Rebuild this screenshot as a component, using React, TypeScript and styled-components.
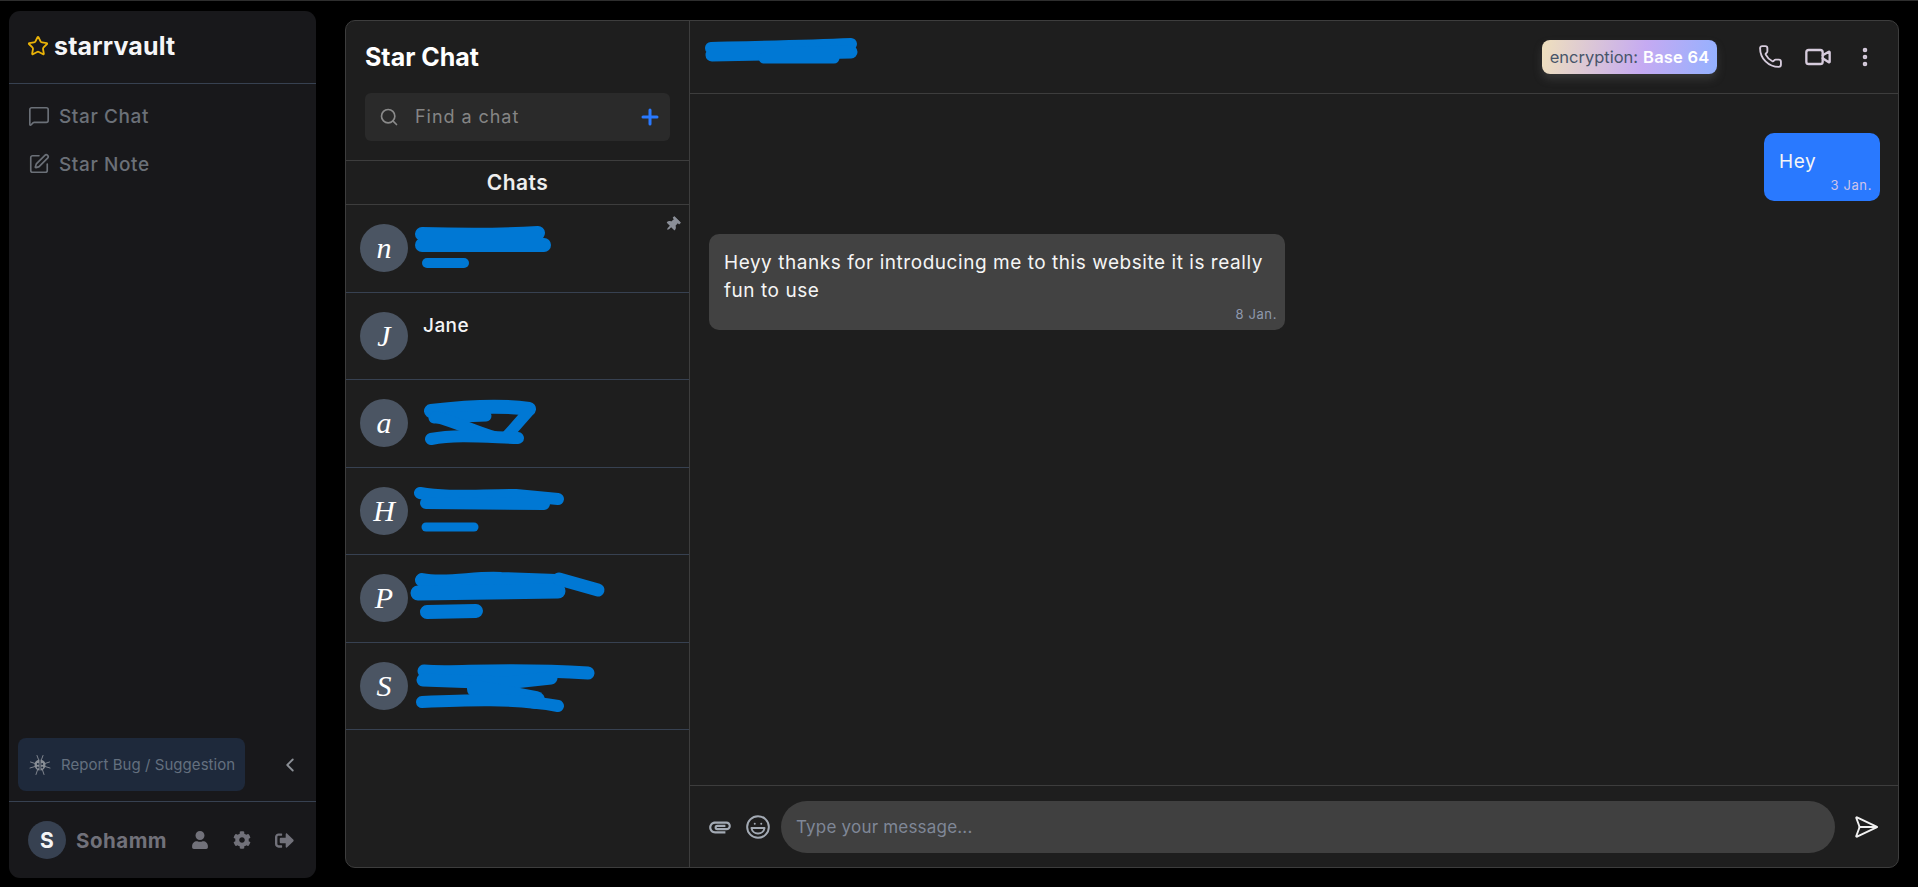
import React from "react";
import styled, { createGlobalStyle } from "styled-components";
import {
  ChevronLeft,
  EllipsisVertical,
  Laugh,
  MessageSquare,
  Phone,
  Plus,
  Search,
  SendHorizontal,
  SquarePen,
  Star,
  Video,
} from "lucide-react";
import { FaCog, FaSignOutAlt, FaThumbtack, FaUser } from "react-icons/fa";
import { MdAttachment } from "react-icons/md";

const GlobalStyle = createGlobalStyle`
  html, body {
    margin: 0;
    height: 100%;
    background: #000;
  }
  * {
    box-sizing: border-box;
  }
  body {
    font-family: Inter, "Liberation Sans", sans-serif;
    overflow: hidden;
  }
`;

const Page = styled.div`
  display: flex;
  height: 887px;
  padding: 10px 19px 9px 9px;
  border-top: 1px solid #2e2e2e;
  background: #000;
`;

const Sidebar = styled.aside`
  width: 307px;
  flex-shrink: 0;
  display: flex;
  flex-direction: column;
  background: #18181b;
  border-radius: 11px;
`;

const Brand = styled.div`
  height: 73px;
  display: flex;
  align-items: center;
  gap: 5px;
  padding: 0 0 2px 18px;
  border-bottom: 1px solid #374151;
  color: #f5f5f7;
  font-size: 25px;
  font-weight: 700;
  letter-spacing: 0.15px;
`;

const Nav = styled.nav`
  flex: 1;
  display: flex;
  flex-direction: column;
  gap: 24px;
  padding: 20px 0 0 19px;
`;

const NavItem = styled.div`
  display: flex;
  align-items: center;
  gap: 9px;
  height: 24px;
  color: #6b7078;
  font-size: 19px;
  font-weight: 500;
  letter-spacing: 0.6px;
`;

const ReportRow = styled.div`
  display: flex;
  align-items: center;
  padding: 0 0 10px 9px;
  color: #8b8f96;
`;

const ReportButton = styled.div`
  width: 227px;
  height: 53px;
  display: flex;
  align-items: center;
  gap: 10px;
  padding-left: 11px;
  margin-right: 34px;
  background: #1e293b;
  border-radius: 8px;
  color: #64707f;
  font-size: 15px;
  letter-spacing: 0.05px;
  white-space: nowrap;
`;

const BugIcon = styled.svg`
  width: 22px;
  height: 22px;
  flex-shrink: 0;
  fill: none;
  stroke: #8a8f96;
  stroke-linecap: round;
`;

const UserBar = styled.div`
  flex: 1 0 77px;
  max-height: 77px;
  display: flex;
  align-items: center;
  padding-left: 19px;
  border-top: 1px solid #374151;
  color: #71717a;
`;

const UserAvatar = styled.div`
  width: 38px;
  height: 38px;
  border-radius: 50%;
  display: flex;
  align-items: center;
  justify-content: center;
  background: #374151;
  color: #f4f4f5;
  font-size: 21px;
  font-weight: 700;
`;

const UserName = styled.span`
  width: 125px;
  padding-left: 10px;
  font-size: 20.5px;
  font-weight: 700;
  letter-spacing: 0.5px;
`;

const UserActions = styled.div`
  display: flex;
  align-items: center;
  gap: 24px;
`;

const Panel = styled.main`
  flex: 1;
  display: flex;
  margin: 9px 0 10px 29px;
  background: #1e1e1e;
  border: 1px solid #3d3d3d;
  border-radius: 10px;
  overflow: hidden;
`;

const ChatList = styled.section`
  width: 344px;
  flex-shrink: 0;
  border-right: 1px solid #3d3d3d;
`;

const ListHead = styled.div`
  padding: 18px 19px 19px;
  border-bottom: 1px solid #3d3d3d;
`;

const Title = styled.h1`
  margin: 0 0 18px;
  color: #fff;
  font-size: 25px;
  line-height: 36px;
  font-weight: 700;
  letter-spacing: 0;
`;

const SearchBox = styled.div`
  height: 48px;
  display: flex;
  align-items: center;
  padding: 0 8px 0 14px;
  background: #2a2a2a;
  border-radius: 6px;
  color: #8a8a8a;
`;

const SearchInput = styled.input`
  flex: 1;
  min-width: 0;
  margin: -2px 0 0 14px;
  border: 0;
  outline: 0;
  background: transparent;
  color: #fff;
  font: 400 18px Inter, "Liberation Sans", sans-serif;
  letter-spacing: 0.95px;
  &::placeholder {
    color: #858585;
    opacity: 1;
  }
`;

const SectionLabel = styled.div`
  height: 44px;
  display: flex;
  align-items: center;
  justify-content: center;
  border-bottom: 1px solid #3d3d3d;
  color: #eeeeee;
  font-size: 21px;
  font-weight: 600;
  letter-spacing: 0.5px;
`;

const Row = styled.div`
  position: relative;
  height: 87.5px;
  display: flex;
  align-items: center;
  gap: 15px;
  padding-left: 14px;
  border-bottom: 1px solid #374151;
`;

const LetterAvatar = styled.div`
  width: 48px;
  height: 48px;
  flex-shrink: 0;
  border-radius: 50%;
  display: flex;
  align-items: center;
  justify-content: center;
  background: #4b5563;
  color: #fff;
  font-family: "Liberation Serif", serif;
  font-style: italic;
  font-size: 30px;
`;

const RowName = styled.div`
  align-self: flex-start;
  padding-top: 20px;
  color: #f4f4f5;
  font-size: 19px;
  line-height: 26px;
  font-weight: 500;
  letter-spacing: 0.45px;
`;

const PinMark = styled.span`
  position: absolute;
  top: 12px;
  right: 9px;
  color: #8b8f98;
  transform: rotate(45deg);
  display: flex;
`;

const Scribble = styled.svg`
  position: absolute;
  left: 0;
  top: 0;
  width: 343px;
  height: 87px;
  fill: none;
  stroke: #0078d4;
  stroke-linecap: round;
  stroke-linejoin: round;
  pointer-events: none;
`;

const ChatArea = styled.section`
  flex: 1;
  min-width: 0;
  display: flex;
  flex-direction: column;
`;

const ChatHeader = styled.header`
  height: 73px;
  flex-shrink: 0;
  display: flex;
  align-items: center;
  padding: 0 21px 0 14px;
  border-bottom: 1px solid #3d3d3d;
  color: #d6cbdc;
`;

const HeaderScribble = styled.svg`
  width: 154px;
  height: 28px;
  margin-right: auto;
  margin-top: -12px;
  fill: none;
  stroke: #0078d4;
  stroke-linecap: round;
`;

const EncryptionTag = styled.div`
  width: 175px;
  height: 34px;
  margin: 0 41px 0 0;
  display: flex;
  align-items: center;
  justify-content: center;
  gap: 5px;
  background: linear-gradient(100deg, #efe0bd 0%, #c5aaf2 58%, #93b1ff 100%);
  border-radius: 8px;
  box-shadow: 0 5px 8px rgba(85, 85, 85, 0.45);
  color: #475569;
  font-size: 16.5px;
  white-space: nowrap;
`;

const TagValue = styled.span`
  color: #fff;
  font-weight: 600;
  letter-spacing: 0.2px;
`;

const HeaderIcons = styled.div`
  display: flex;
  align-items: center;
  gap: 21px;
  margin-top: -1px;
`;

const Messages = styled.div`
  flex: 1;
  display: flex;
  flex-direction: column;
  gap: 33px;
  padding: 39px 18px 0 19px;
`;

const Bubble = styled.div<{ $mine?: boolean }>`
  align-self: ${(p) => (p.$mine ? "flex-end" : "flex-start")};
  width: ${(p) => (p.$mine ? "116px" : "576px")};
  padding: 15px 8px 7px 15px;
  border-radius: 10px;
  background: ${(p) => (p.$mine ? "#2979ff" : "#424242")};
  color: #f5f5f5;
  font-size: 19px;
  line-height: 28px;
  letter-spacing: 0.54px;
`;

const Stamp = styled.div<{ $mine?: boolean }>`
  text-align: right;
  color: ${(p) => (p.$mine ? "#cfc4ea" : "#8f99ad")};
  font-size: 13px;
  line-height: 18px;
  letter-spacing: 0.6px;
`;

const Composer = styled.footer`
  height: 82px;
  flex-shrink: 0;
  display: flex;
  align-items: center;
  padding: 0 19px 0 17px;
  border-top: 1px solid #3d3d3d;
  color: #a3aab4;
`;

const SmileWrap = styled.span`
  display: flex;
  margin: 0 10px 0 12px;
`;

const MessageInput = styled.input`
  flex: 1;
  height: 52px;
  min-width: 0;
  margin-right: 18px;
  padding: 0 15px;
  border: 0;
  outline: 0;
  border-radius: 26px;
  background: #404040;
  color: #fff;
  font: 400 17px Inter, "Liberation Sans", sans-serif;
  letter-spacing: 0.2px;
  &::placeholder {
    color: #7f8797;
    opacity: 1;
  }
`;

type Chat = {
  letter: string;
  name?: string;
  pinned?: boolean;
  strokes: { d: string; w: number }[];
};

// the names on these rows are painted over in the reference
const chats: Chat[] = [
  {
    letter: "n",
    pinned: true,
    strokes: [
      { d: "M76 29 C110 30 160 30 192 28", w: 14 },
      { d: "M76 40 L198 40", w: 14 },
      { d: "M81 58 L118 58", w: 10 },
    ],
  },
  { letter: "J", name: "Jane", strokes: [] },
  {
    letter: "a",
    strokes: [
      { d: "M85 31 C110 28 150 24 183 29", w: 14 },
      { d: "M88 38 L140 36", w: 11 },
      { d: "M182 32 L160 57", w: 11 },
      { d: "M90 37 C110 42 125 50 148 57", w: 12 },
      { d: "M85 59 C110 54 140 57 172 58", w: 12 },
    ],
  },
  {
    letter: "H",
    strokes: [
      { d: "M74 25 C100 30 130 27 170 27 L212 31", w: 12 },
      { d: "M80 35 L198 36", w: 12 },
      { d: "M80 59 L128 59", w: 9 },
    ],
  },
  {
    letter: "P",
    strokes: [
      { d: "M76 25 C100 30 130 22 155 24 L210 26", w: 14 },
      { d: "M72 38 L212 36", w: 15 },
      { d: "M213 24 L252 35", w: 13 },
      { d: "M81 57 L130 56", w: 14 },
    ],
  },
  {
    letter: "S",
    strokes: [
      { d: "M78 28 C110 31 150 24 242 30", w: 13 },
      { d: "M77 37 L160 40 L205 35", w: 13 },
      { d: "M130 46 L190 57", w: 18 },
      { d: "M76 59 C120 57 170 55 212 63", w: 12 },
    ],
  },
];

export default function App() {
  return (
    <>
      <GlobalStyle />
      <Page>
        <Sidebar>
          <Brand>
            <Star size={22} color="#eab308" strokeWidth={2} />
            starrvault
          </Brand>
          <Nav>
            <NavItem>
              <MessageSquare size={22} strokeWidth={1.8} />
              Star Chat
            </NavItem>
            <NavItem>
              <SquarePen size={22} strokeWidth={1.8} />
              Star Note
            </NavItem>
          </Nav>
          <ReportRow>
            <ReportButton>
              <BugIcon viewBox="0 0 22 22">
                <circle cx="11" cy="11" r="5.5" fill="#8a8f96" stroke="none" />
                <path d="M11 5.5 V16.5" stroke="#1e293b" strokeWidth={1} />
                <circle cx="8.8" cy="10" r="1" fill="#1e293b" stroke="none" />
                <circle cx="13.2" cy="10" r="1" fill="#1e293b" stroke="none" />
                <circle cx="8.8" cy="13.4" r="1" fill="#1e293b" stroke="none" />
                <circle cx="13.2" cy="13.4" r="1" fill="#1e293b" stroke="none" />
                <path d="M8 1.5 L9.5 5.5 M14 1.5 L12.5 5.5 M1.5 8 L6 9.5 M20.5 8 L16 9.5 M1 14 L6 12.5 M21 14 L16 12.5 M7 20.5 L8.5 16 M15 20.5 L13.5 16" strokeWidth={0.9} />
              </BugIcon>
              Report Bug / Suggestion
            </ReportButton>
            <ChevronLeft size={22} />
          </ReportRow>
          <UserBar>
            <UserAvatar>S</UserAvatar>
            <UserName>Sohamm</UserName>
            <UserActions>
              <FaUser size={18} />
              <FaCog size={18} />
              <FaSignOutAlt size={19} />
            </UserActions>
          </UserBar>
        </Sidebar>

        <Panel>
          <ChatList>
            <ListHead>
              <Title>Star Chat</Title>
              <SearchBox>
                <Search size={20} />
                <SearchInput placeholder="Find a chat" />
                <Plus size={24} color="#2979ff" strokeWidth={3} />
              </SearchBox>
            </ListHead>
            <SectionLabel>Chats</SectionLabel>
            {chats.map((chat) => (
              <Row key={chat.letter}>
                <LetterAvatar>{chat.letter}</LetterAvatar>
                {chat.name && <RowName>{chat.name}</RowName>}
                {chat.pinned && (
                  <PinMark>
                    <FaThumbtack size={15} />
                  </PinMark>
                )}
                {chat.strokes.length > 0 && (
                  <Scribble viewBox="0 0 343 87">
                    {chat.strokes.map((s) => (
                      <path key={s.d} d={s.d} strokeWidth={s.w} />
                    ))}
                  </Scribble>
                )}
              </Row>
            ))}
          </ChatList>

          <ChatArea>
            <ChatHeader>
              <HeaderScribble viewBox="0 0 154 28">
                <path d="M7 11 C50 10 100 9 147 7" strokeWidth={12} />
                <path d="M8 18 L147 15" strokeWidth={13} />
                <path d="M60 21 L130 21" strokeWidth={11} />
              </HeaderScribble>
              <EncryptionTag>
                encryption: <TagValue>Base 64</TagValue>
              </EncryptionTag>
              <HeaderIcons>
                <Phone size={25} strokeWidth={1.8} />
                <Video size={28} strokeWidth={2} />
                <EllipsisVertical size={24} strokeWidth={2.6} />
              </HeaderIcons>
            </ChatHeader>

            <Messages>
              <Bubble $mine>
                Hey
                <Stamp $mine>3 Jan.</Stamp>
              </Bubble>
              <Bubble>
                Heyy thanks for introducing me to this website it is really fun to use
                <Stamp>8 Jan.</Stamp>
              </Bubble>
            </Messages>

            <Composer>
              <MdAttachment size={26} />
              <SmileWrap>
                <Laugh size={26} strokeWidth={1.8} />
              </SmileWrap>
              <MessageInput placeholder="Type your message..." />
              <SendHorizontal size={26} color="#f0f0f0" strokeWidth={1.8} />
            </Composer>
          </ChatArea>
        </Panel>
      </Page>
    </>
  );
}
